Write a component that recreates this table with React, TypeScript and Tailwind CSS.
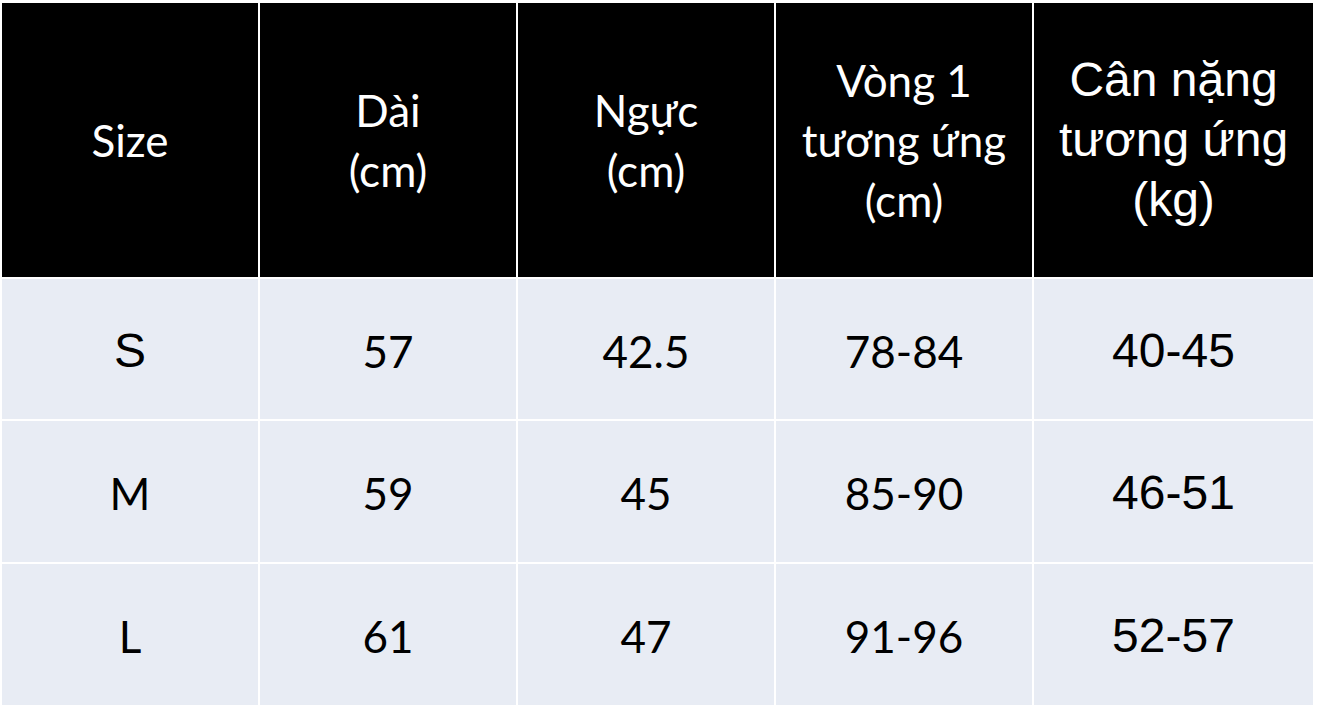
import React from "react";

const cal = "font-[Lato] text-[44px] leading-[60px]";
const ari = "[font-family:Liberation_Sans,Arial,sans-serif] text-[48px] leading-[60px]";

type Cell = { t: string; f: "c" | "a" };

const header: Cell[] = [
  { t: "Size", f: "c" },
  { t: "Dài\n(cm)", f: "c" },
  { t: "Ngực\n(cm)", f: "c" },
  { t: "Vòng 1\ntương ứng\n(cm)", f: "c" },
  { t: "Cân nặng\ntương ứng\n(kg)", f: "a" },
];

const rows: Cell[][] = [
  [
    { t: "S", f: "a" },
    { t: "57", f: "c" },
    { t: "42.5", f: "c" },
    { t: "78-84", f: "c" },
    { t: "40-45", f: "a" },
  ],
  [
    { t: "M", f: "c" },
    { t: "59", f: "c" },
    { t: "45", f: "c" },
    { t: "85-90", f: "c" },
    { t: "46-51", f: "a" },
  ],
  [
    { t: "L", f: "c" },
    { t: "61", f: "c" },
    { t: "47", f: "c" },
    { t: "91-96", f: "c" },
    { t: "52-57", f: "a" },
  ],
];

export default function App() {
  return (
    <div className="w-[1317px] h-[709px] bg-white pt-[3px] pl-[2px] overflow-hidden">
      <div className="grid grid-cols-[256px_256px_256px_256px_279px] grid-rows-[274px_140px_141px_141px] gap-[2px]">
        {header.map((c, i) => (
          <div
            key={"h" + i}
            className={`bg-black text-white flex items-center justify-center text-center whitespace-pre-line ${
              c.f === "c" ? cal : ari
            }`}
          >
            {c.t}
          </div>
        ))}
        {rows.map((r, ri) =>
          r.map((c, ci) => (
            <div
              key={ri + "-" + ci}
              className={`bg-[#e8ecf4] text-black flex items-center justify-center text-center pt-[3px] ${
                c.f === "c" ? cal : ari
              }`}
            >
              {c.t}
            </div>
          ))
        )}
      </div>
    </div>
  );
}
